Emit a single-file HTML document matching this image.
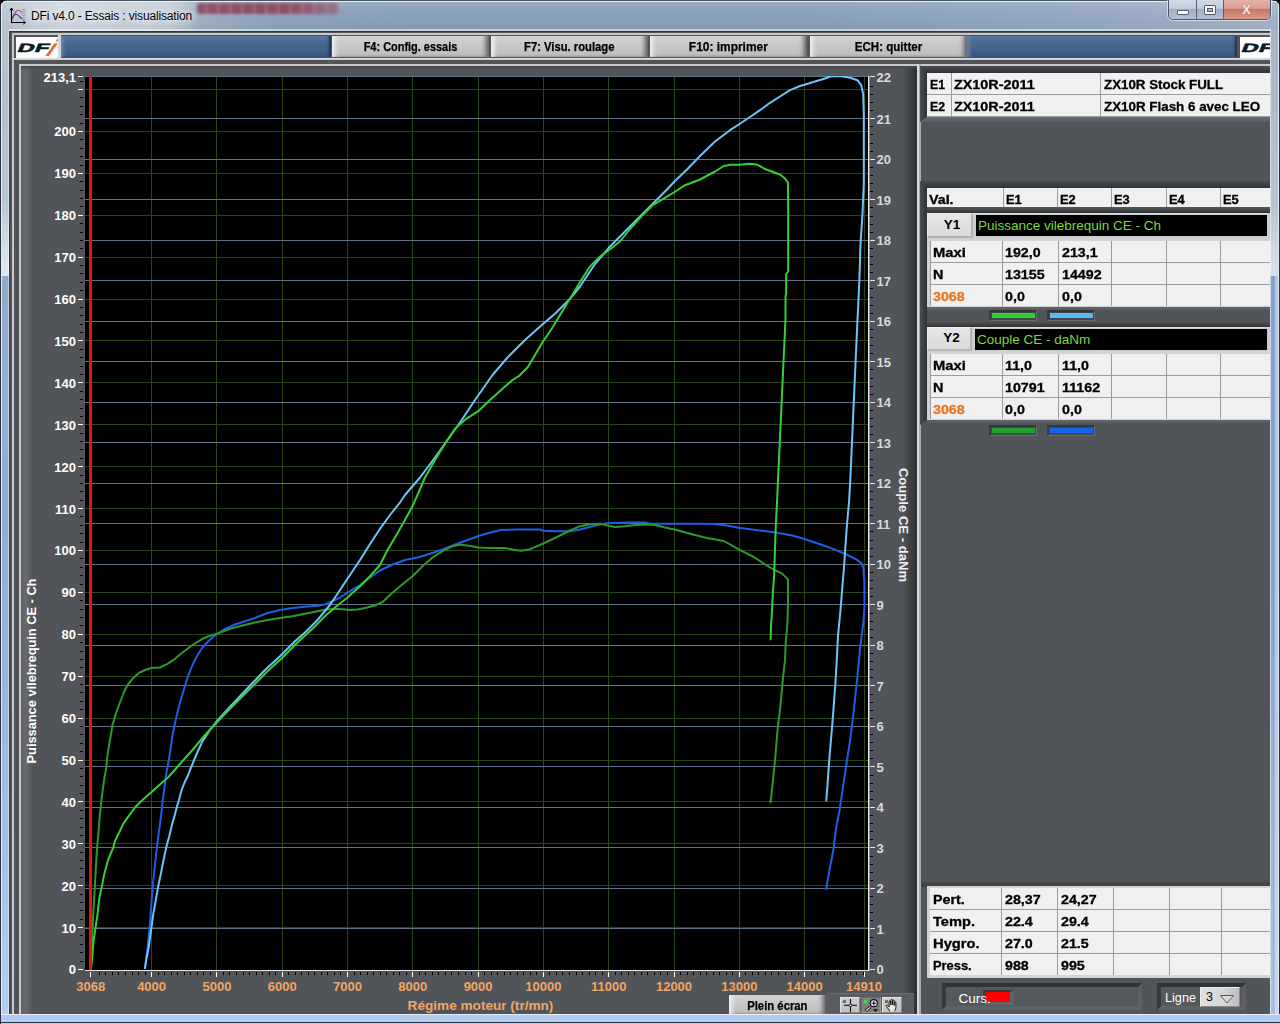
<!DOCTYPE html><html lang="fr"><head><meta charset="utf-8"><title>DFi v4.0 - Essais : visualisation</title><style>
html,body{margin:0;padding:0;}
body{width:1280px;height:1024px;overflow:hidden;position:relative;background:#b5cbe6;font-family:"Liberation Sans",sans-serif;}
div{position:absolute;box-sizing:border-box;}
.t{white-space:nowrap;font-size:12.5px;font-weight:bold;color:#000;}
.cell{background:#f0f0f0;-webkit-text-stroke-width:.3px;}
.btn{background:linear-gradient(#d3d3d3,#c9c9c9 40%,#bcbcbc);box-shadow:inset 6px 0 5px -3px #f2f2f2,inset -6px 0 5px -3px #5a5a5a,inset 0 1px 0 #dcdcdc,inset 0 -2px 2px -1px #9a9a9a;text-align:center;font-weight:bold;font-size:12.5px;color:#000;white-space:nowrap;-webkit-text-stroke-width:.25px;}
.nx{display:inline-block;transform:scaleX(.875);}
.wx{display:inline-block;transform:scaleX(1.14);transform-origin:0 50%;}
.blue{background:linear-gradient(#55779f,#47698f 30%,#3d5d85 80%,#2f4c72);}
svg{position:absolute;left:0;top:0;}
</style></head><body>
<div style="left:0;top:0;width:1280px;height:31px;background:linear-gradient(to right,#bcc6d4 0,#cfd8e3 60px,#c5cfdb 170px,#a0b1c5 200px,#90a5bc 260px,#8aa0b9 400px,#8aa0ba 800px,#96aac2 1100px,#a6b6ca 1280px);"></div>
<div style="left:0;top:2px;width:1280px;height:28px;background:linear-gradient(rgba(255,255,255,.12),rgba(255,255,255,0) 40%,rgba(0,0,0,.04));"></div>
<div style="left:197px;top:2.5px;width:142px;height:11.5px;background:linear-gradient(to right,rgba(150,140,160,0) 65%,rgba(160,150,168,.55) 100%),repeating-linear-gradient(90deg,#8a3850 0,#8a3850 7px,#9c6478 9px,#8a3850 12px);opacity:.8;filter:blur(1.8px);border-radius:3px;"></div>
<div style="left:9px;top:29px;width:1262px;height:2px;background:rgba(255,255,255,.5);"></div>
<div style="left:0px;top:0px;width:1280px;height:1px;background:#4a5562;"></div>
<div style="left:1px;top:1px;width:1278px;height:1px;background:#e6edf5;"></div>
<div style="left:0;top:31px;width:9px;height:245px;background:linear-gradient(#b9c3d1 0,#b0bfd0 69px,#b5c8da 169px,#dbe3ec 231px,#e0e7ef 245px);"></div>
<div style="left:0;top:276px;width:9px;height:748px;background:linear-gradient(#8fa9c8 0,#94b0d2 124px,#8facd2 236px,#a0bde2 524px,#b2cef0 724px,#b2cef0 748px);"></div>
<div style="left:1px;top:1px;width:1px;height:1021px;background:#e3ebf4;"></div>
<div style="left:8px;top:31px;width:1px;height:983px;background:rgba(255,255,255,.45);"></div>
<div style="left:1270px;top:31px;width:10px;height:245px;background:linear-gradient(#a6b6ca 0,#adbbcd 69px,#b5c3d2 169px,#d3dbe5 231px,#d8dfe8 245px);"></div>
<div style="left:1270px;top:276px;width:10px;height:748px;background:linear-gradient(to right,#86a4cc 0,#86a4cc 5px,#b4c9e4 5px);"></div>
<div style="left:1270px;top:276px;width:10px;height:748px;background:linear-gradient(rgba(255,255,255,0) 0,rgba(255,255,255,0) 300px,rgba(255,255,255,.3) 748px);"></div>
<div style="left:1270px;top:31px;width:1px;height:983px;background:rgba(255,255,255,.55);"></div>
<div style="left:1278px;top:1px;width:1px;height:1021px;background:#dbe5f0;"></div>
<div style="left:1279px;top:0;width:1px;height:1024px;background:#2c3440;"></div>
<div style="left:0;top:1014px;width:1280px;height:10px;background:linear-gradient(#e8f1fa 0,#e8f1fa 1px,#b0cdef 1px,#b0cdef 8px,#2c3644 8px,#2c3644 9px,#c4ccd4 9px);"></div>
<div style="left:0px;top:0px;width:1px;height:1024px;background:#2c3440;"></div>
<svg width="1280" height="8" viewBox="0 0 1280 8" style="left:0;top:0"><path d="M0 0H7C3 1 1 3 0 7Z" fill="#0c0c0c"/><path d="M1280 0H1273C1277 1 1279 3 1280 7Z" fill="#0c0c0c"/></svg>
<svg width="40" height="31" viewBox="0 0 40 31" style="left:0;top:0">
<path d="M22 9.500h3.500M22 11.500h3.500M22 13.500h3.500M22 15.500h3.500M22 17.500h3.500M22 19.500h3.500" stroke="#8b95a6" stroke-width=".8"/>
<path d="M11.500 8.500V22.500H25" fill="none" stroke="#000" stroke-width="1.100"/>
<path d="M9.900 10.600L11.500 8L13.100 10.600M23.200 20.900L25.700 22.500L23.200 24.100" fill="none" stroke="#000" stroke-width="1"/>
<path d="M12.500 20C13.500 14.500 16 10.200 18.500 10.200C20 10.200 21 11.500 22 12.700" fill="none" stroke="#e23a3a" stroke-width="1.100"/>
<path d="M12.200 18C13 16 15 14.200 16.500 14.200C18.500 14.500 20 17 22 19" fill="none" stroke="#3232c8" stroke-width="1.100"/>
</svg>
<div class="t " style="left:31px;top:9px;font-weight:normal;font-size:12px;letter-spacing:-0.15px;color:#000;text-shadow:0 0 6px #fff,0 0 10px #fff;">DFi v4.0 - Essais : visualisation</div>
<div style="left:1168px;top:0;width:103px;height:20px;border:1px solid #4a5766;border-top:none;border-radius:0 0 5px 5px;overflow:hidden;box-shadow:0 0 0 1px rgba(255,255,255,.55);"><div style="left:0;top:0;width:28px;height:19px;background:linear-gradient(#d2dbe6 0,#c0ccda 45%,#9fb0c5 50%,#b4c3d6);border-right:1px solid #55606e;"></div><div style="left:28px;top:0;width:27px;height:19px;background:linear-gradient(#d2dbe6 0,#c0ccda 45%,#9fb0c5 50%,#b4c3d6);border-right:1px solid #55606e;"></div><div style="left:55px;top:0;width:47px;height:19px;background:linear-gradient(#e2b3ad 0,#d99b92 45%,#c8776a 50%,#d89a8a);"></div></div>
<div style="left:1177px;top:10px;width:12px;height:5px;background:#fff;border:1px solid #535b66;border-radius:1px;"></div>
<div style="left:1204px;top:5px;width:12px;height:10px;background:#fff;border:1px solid #535b66;border-radius:1px;"></div>
<div style="left:1207px;top:8px;width:6px;height:4px;background:#a9b6c6;border:1px solid #535b66;"></div>
<div class="t " style="left:1242px;top:0px;font-size:16px;color:#f3e8e6;font-weight:bold;text-shadow:0 0 1px #7a3a34;font-family:'Liberation Sans',sans-serif;">x</div>
<div style="left:9px;top:31px;width:1261px;height:983px;background:#515458;"></div>
<div style="left:9px;top:31px;width:1261px;height:1px;background:#33363a;"></div>
<div style="left:9px;top:31px;width:1px;height:983px;background:#3a3d40;"></div>
<div style="left:12px;top:33px;width:1258px;height:2px;background:#c9c9c9;"></div>
<div style="left:12px;top:33px;width:2px;height:981px;background:#c9c9c9;"></div>
<div style="left:16px;top:37px;width:42px;height:21px;background:#fff;"></div>
<div style="left:58px;top:35px;width:3px;height:24px;background:#d4d4d4;"></div>
<div style="left:61px;top:36px;width:270px;height:21px;background:;background:linear-gradient(#57789f,#49698f 30%,#40608a 75%,#34527a);box-shadow:inset 5px 0 4px -3px #6c8cb4,inset -4px 0 3px -2px #1d2f48;"></div>
<div class="btn" style="left:332px;top:36px;width:157px;height:21px;line-height:23px;"><span class="nx" style="transform:scaleX(0.875)">F4: Config. essais</span></div>
<div class="btn" style="left:491px;top:36px;width:157px;height:21px;line-height:23px;"><span class="nx" style="transform:scaleX(0.9)">F7: Visu. roulage</span></div>
<div class="btn" style="left:650px;top:36px;width:157px;height:21px;line-height:23px;"><span class="nx" style="transform:scaleX(0.955)">F10: imprimer</span></div>
<div class="btn" style="left:809.5px;top:36px;width:157px;height:21px;line-height:23px;"><span class="nx" style="transform:scaleX(0.924)">ECH: quitter</span></div>
<div style="left:967px;top:36px;width:270px;height:21px;background:;background:linear-gradient(#57789f,#49698f 30%,#40608a 75%,#34527a);box-shadow:inset 5px 0 4px -3px #6c8cb4,inset -4px 0 3px -2px #1d2f48;"></div>
<div style="left:1240px;top:37px;width:30px;height:21px;background:#fff;"></div>
<div style="left:12px;top:58px;width:1258px;height:2px;background:;background:linear-gradient(#dcdcdc,#cacaca);"></div>
<svg width="42" height="21" viewBox="0 0 42 21" style="left:16px;top:37px;overflow:hidden"><g transform="translate(0.6,15.1) skewX(-22) scale(1.93,1)"><text x="0" y="0" font-family="Liberation Sans,sans-serif" font-weight="bold" font-size="12" fill="#0e1c27" stroke="#0e1c27" stroke-width=".55" letter-spacing="0.2">DF</text></g><g transform="translate(29.2,19.3) skewX(-27)"><text x="0" y="0" font-family="Liberation Sans,sans-serif" font-weight="bold" font-style="italic" font-size="23.5" fill="#e8672a" stroke="#e8672a" stroke-width=".15">i</text></g></svg>
<svg width="30" height="21" viewBox="0 0 30 21" style="left:1240px;top:37px;overflow:hidden"><g transform="translate(0.6,15.1) skewX(-22) scale(1.93,1)"><text x="0" y="0" font-family="Liberation Sans,sans-serif" font-weight="bold" font-size="12" fill="#0e1c27" stroke="#0e1c27" stroke-width=".55" letter-spacing="0.2">DF</text></g></svg>
<div style="left:19px;top:64px;width:900px;height:2px;background:#c9c9c9;"></div>
<div style="left:19px;top:64px;width:2px;height:950px;background:#c9c9c9;"></div>
<div style="left:917px;top:64px;width:2px;height:950px;background:#dadada;"></div>
<div style="left:919px;top:64px;width:2px;height:950px;background:#a8aaad;"></div>
<div style="left:921px;top:64px;width:349px;height:2px;background:#c9c9c9;"></div>
<div style="left:21px;top:66px;width:12px;height:948px;background:;background:linear-gradient(to right,#626467,#67696b 45%,#515458);"></div>
<div style="left:903px;top:66px;width:14px;height:948px;background:;background:linear-gradient(to right,#515458,#3f4144 50%,#2e3033);"></div>
<div style="left:21px;top:66px;width:896px;height:4px;background:;background:linear-gradient(#43464a,rgba(81,84,88,0));"></div>
<svg width="1280" height="1024" viewBox="0 0 1280 1024" style="left:0;top:0" font-family="Liberation Sans,sans-serif" font-weight="bold" font-size="13">
<rect x="85" y="76" width="783" height="894" fill="#000"/>
<g shape-rendering="crispEdges">
<rect x="151" y="76" width="1" height="894" fill="#2a4516"/>
<rect x="216" y="76" width="1" height="894" fill="#2a4516"/>
<rect x="282" y="76" width="1" height="894" fill="#2a4516"/>
<rect x="347" y="76" width="1" height="894" fill="#2a4516"/>
<rect x="412" y="76" width="1" height="894" fill="#2a4516"/>
<rect x="478" y="76" width="1" height="894" fill="#2a4516"/>
<rect x="543" y="76" width="1" height="894" fill="#2a4516"/>
<rect x="608" y="76" width="1" height="894" fill="#2a4516"/>
<rect x="674" y="76" width="1" height="894" fill="#2a4516"/>
<rect x="739" y="76" width="1" height="894" fill="#2a4516"/>
<rect x="804" y="76" width="1" height="894" fill="#2a4516"/>
<rect x="864" y="76" width="1" height="894" fill="#2a4516"/>
<rect x="85" y="927" width="783" height="1" fill="#2a4516"/>
<rect x="85" y="885" width="783" height="1" fill="#2a4516"/>
<rect x="85" y="843" width="783" height="1" fill="#2a4516"/>
<rect x="85" y="801" width="783" height="1" fill="#2a4516"/>
<rect x="85" y="760" width="783" height="1" fill="#2a4516"/>
<rect x="85" y="718" width="783" height="1" fill="#2a4516"/>
<rect x="85" y="676" width="783" height="1" fill="#2a4516"/>
<rect x="85" y="634" width="783" height="1" fill="#2a4516"/>
<rect x="85" y="592" width="783" height="1" fill="#2a4516"/>
<rect x="85" y="550" width="783" height="1" fill="#2a4516"/>
<rect x="85" y="508" width="783" height="1" fill="#2a4516"/>
<rect x="85" y="466" width="783" height="1" fill="#2a4516"/>
<rect x="85" y="424" width="783" height="1" fill="#2a4516"/>
<rect x="85" y="382" width="783" height="1" fill="#2a4516"/>
<rect x="85" y="340" width="783" height="1" fill="#2a4516"/>
<rect x="85" y="299" width="783" height="1" fill="#2a4516"/>
<rect x="85" y="257" width="783" height="1" fill="#2a4516"/>
<rect x="85" y="215" width="783" height="1" fill="#2a4516"/>
<rect x="85" y="173" width="783" height="1" fill="#2a4516"/>
<rect x="85" y="131" width="783" height="1" fill="#2a4516"/>
<rect x="85" y="89" width="783" height="1" fill="#2a4516"/>
<rect x="85" y="928" width="783" height="1" fill="#607288"/>
<rect x="85" y="888" width="783" height="1" fill="#607288"/>
<rect x="85" y="847" width="783" height="1" fill="#607288"/>
<rect x="85" y="807" width="783" height="1" fill="#607288"/>
<rect x="85" y="766" width="783" height="1" fill="#607288"/>
<rect x="85" y="726" width="783" height="1" fill="#607288"/>
<rect x="85" y="685" width="783" height="1" fill="#607288"/>
<rect x="85" y="645" width="783" height="1" fill="#607288"/>
<rect x="85" y="604" width="783" height="1" fill="#607288"/>
<rect x="85" y="564" width="783" height="1" fill="#607288"/>
<rect x="85" y="523" width="783" height="1" fill="#607288"/>
<rect x="85" y="483" width="783" height="1" fill="#607288"/>
<rect x="85" y="442" width="783" height="1" fill="#607288"/>
<rect x="85" y="402" width="783" height="1" fill="#607288"/>
<rect x="85" y="361" width="783" height="1" fill="#607288"/>
<rect x="85" y="321" width="783" height="1" fill="#607288"/>
<rect x="85" y="280" width="783" height="1" fill="#607288"/>
<rect x="85" y="240" width="783" height="1" fill="#607288"/>
<rect x="85" y="199" width="783" height="1" fill="#607288"/>
<rect x="85" y="159" width="783" height="1" fill="#607288"/>
<rect x="85" y="118" width="783" height="1" fill="#607288"/>
<rect x="85" y="76" width="783" height="1" fill="#607288"/>
</g>
<clipPath id="pc"><rect x="85" y="76" width="783" height="894"/></clipPath><g clip-path="url(#pc)">
<polyline points="144.9,969.0 146.2,958.0 147.5,947.5 149.4,929.8 150.6,914.5 151.9,896.8 153.2,881.5 155.1,863.8 156.8,848.1 158.3,836.4 159.9,824.7 161.4,813.0 162.6,801.2 164.2,789.5 165.7,777.8 166.9,770.0 167.5,767.5 170.0,752.5 172.5,735.0 176.2,717.5 180.0,702.5 183.8,690.0 187.5,677.5 192.5,665.0 197.5,655.0 202.5,647.5 207.5,642.0 212.5,637.5 217.5,633.8 225.0,628.8 235.0,624.5 245.0,621.2 255.0,618.0 267.5,613.0 280.0,610.0 292.5,608.0 305.0,606.8 317.5,605.8 325.0,604.5 332.5,601.2 340.0,597.5 350.0,591.2 360.0,585.0 370.0,577.5 380.0,570.5 392.5,564.5 405.0,560.0 417.5,557.5 430.0,553.8 442.5,549.5 455.0,544.5 467.5,540.0 480.0,535.5 492.5,532.0 501.2,530.0 517.5,529.5 540.0,529.5 543.8,530.8 555.0,531.2 570.0,531.2 580.0,529.5 592.5,526.2 600.0,524.5 608.8,523.0 630.0,522.5 645.0,522.5 650.0,523.8 674.5,523.8 700.0,523.8 714.4,524.0 723.8,525.0 738.8,527.8 753.8,529.7 772.5,532.0 791.2,535.3 804.4,539.0 819.4,544.0 834.4,549.4 847.5,555.0 856.9,559.7 861.6,563.4 863.4,568.0 864.4,583.0 864.4,607.5 863.4,622.5 861.6,635.6 859.7,652.5 859.0,660.0 856.7,683.4 853.7,711.6 850.2,739.7 846.6,763.0 843.1,786.6 839.6,810.0 836.0,828.8 833.8,847.5 830.2,866.2 827.2,882.6 826.2,890.0" fill="none" stroke="#1c5fe6" stroke-width="2" stroke-linejoin="round"/>
<polyline points="91.0,969.0 91.6,950.0 92.2,934.8 93.5,909.5 94.8,887.9 96.0,865.0 97.0,848.1 98.2,836.4 99.7,816.9 101.3,801.2 102.8,789.5 104.4,777.8 106.0,770.0 107.5,755.0 110.0,740.0 112.5,725.0 116.2,712.5 120.0,702.5 123.8,692.5 127.5,685.0 132.5,678.8 138.8,673.0 145.0,670.0 151.2,668.0 160.0,667.5 167.5,663.8 175.0,658.8 182.5,652.5 192.5,645.0 202.5,638.8 210.0,635.8 216.8,633.8 230.0,628.8 242.5,625.5 255.0,622.5 267.5,620.0 280.0,618.0 292.5,616.2 305.0,613.8 317.5,611.2 326.2,609.5 335.0,608.8 342.5,609.2 350.0,610.0 357.5,609.5 365.0,608.0 375.0,605.5 382.5,602.0 390.0,595.0 400.0,586.2 412.5,576.2 422.5,566.2 432.5,557.5 442.5,551.2 452.5,546.2 460.0,544.5 467.5,545.5 478.2,547.5 490.0,548.0 505.0,548.0 515.0,550.0 521.2,550.8 530.0,549.2 540.0,545.0 555.0,538.0 570.0,530.5 580.0,526.2 590.0,524.2 600.0,523.8 608.8,525.8 615.0,527.0 625.0,526.2 635.0,525.0 645.0,524.5 655.0,525.0 665.0,527.5 674.5,529.5 693.8,534.8 706.9,538.0 723.8,541.0 739.7,549.8 753.8,557.0 765.0,564.4 774.4,570.0 781.9,573.4 788.0,579.4 788.0,602.0 787.5,622.5 785.6,645.0 785.0,660.0 782.9,678.8 780.3,706.9 777.5,730.3 775.2,758.4 772.8,781.9 770.5,803.0" fill="none" stroke="#2a9a2a" stroke-width="2" stroke-linejoin="round"/>
<polyline points="144.9,969.0 146.5,958.0 148.7,947.5 151.3,928.5 153.2,914.5 155.7,900.6 158.2,886.6 160.8,873.9 163.3,861.2 166.1,848.1 169.2,836.4 172.0,824.7 174.3,816.9 176.7,807.5 179.0,799.7 181.8,789.5 184.9,781.7 188.0,775.5 190.0,770.0 196.2,755.0 202.5,741.2 210.0,730.0 216.8,721.2 227.5,709.5 240.0,696.2 252.5,683.0 265.0,670.0 280.0,656.2 295.0,641.2 305.0,632.5 317.5,620.0 330.0,605.0 340.0,590.0 350.0,575.0 360.0,560.0 370.0,544.0 380.0,528.8 390.0,515.0 400.0,502.5 405.0,495.0 420.0,477.5 435.0,457.5 447.5,440.0 460.0,422.5 475.0,400.0 492.5,375.0 507.5,357.5 525.0,340.0 543.2,323.8 555.0,313.8 570.0,298.8 580.0,286.5 595.0,264.0 608.8,247.8 620.0,236.5 630.0,226.5 642.5,214.0 655.0,201.5 667.5,189.0 674.5,181.5 687.5,169.0 700.0,156.0 715.0,141.5 730.0,130.2 739.5,124.0 750.0,117.0 760.0,110.2 770.0,102.8 780.0,96.5 790.0,90.2 800.0,86.0 804.5,84.8 815.0,81.5 825.0,78.5 830.0,76.5 840.0,76.0 850.0,77.8 857.5,80.2 861.2,85.2 863.2,94.0 863.8,114.0 863.8,184.0 862.5,214.0 860.5,244.0 859.5,276.5 858.2,306.5 857.5,319.0 850.3,480.0 849.0,502.5 847.1,523.0 845.2,549.4 843.8,570.0 841.9,592.5 840.4,611.2 838.0,635.6 836.8,660.0 835.4,683.4 833.3,711.6 831.4,735.0 829.0,763.0 827.4,786.6 826.2,801.3" fill="none" stroke="#6cc4fb" stroke-width="2" stroke-linejoin="round"/>
<polyline points="91.0,969.0 92.2,957.7 93.5,941.2 95.4,928.5 97.3,915.8 99.2,899.3 101.8,886.6 104.3,873.9 108.1,860.0 113.0,848.1 115.3,840.3 119.2,832.5 123.2,823.9 127.0,818.4 134.9,807.5 141.1,801.2 148.2,795.0 154.4,789.5 163.0,781.7 168.5,777.0 174.7,770.0 180.0,763.8 192.5,750.0 205.0,735.0 216.8,722.5 230.0,708.8 242.5,696.2 255.0,683.8 267.5,671.2 282.5,657.5 297.5,642.5 312.5,628.8 326.2,615.0 335.0,607.5 347.5,597.5 360.0,586.2 370.0,576.2 380.0,565.0 387.5,550.0 395.0,537.5 405.0,520.0 412.5,506.2 417.5,495.0 425.0,477.5 435.0,460.0 445.0,443.8 455.0,428.8 466.2,418.8 478.2,411.2 490.0,400.0 502.5,388.8 512.5,380.0 518.8,376.2 527.5,367.5 535.0,355.0 543.2,341.2 552.5,327.5 560.0,315.0 570.0,298.8 580.0,282.0 590.0,266.5 600.0,256.5 608.8,250.2 620.0,241.5 630.0,229.0 642.5,215.2 652.5,205.2 665.0,197.8 674.5,192.0 685.0,185.2 700.0,179.5 715.0,171.5 723.8,166.0 730.0,164.8 739.5,164.8 750.0,163.8 757.5,164.8 765.0,169.0 775.0,172.8 780.0,174.5 785.0,178.5 788.0,182.8 788.2,214.0 788.2,271.5 786.2,274.0 786.2,294.0 785.5,296.5 785.5,319.0 778.0,480.0 777.2,498.8 775.9,523.0 774.8,555.0 774.0,577.5 772.9,592.5 772.0,611.0 771.0,626.0 770.6,640.3" fill="none" stroke="#35d035" stroke-width="2" stroke-linejoin="round"/>
</g>
<rect x="89" y="76" width="3" height="894" fill="#e8140c" shape-rendering="crispEdges"/>
<g shape-rendering="crispEdges">
<rect x="85" y="970" width="785" height="1" fill="#e4e4e4"/>
<rect x="868" y="76" width="1" height="895" fill="#ececec"/>
<rect x="869" y="76" width="1" height="895" fill="#8b8d8f"/>
<rect x="78" y="969" width="5" height="1" fill="#fff"/>
<rect x="80" y="961" width="3" height="1" fill="#000"/>
<rect x="80" y="952" width="3" height="1" fill="#000"/>
<rect x="80" y="944" width="3" height="1" fill="#000"/>
<rect x="80" y="935" width="3" height="1" fill="#000"/>
<rect x="78" y="927" width="5" height="1" fill="#fff"/>
<rect x="80" y="919" width="3" height="1" fill="#000"/>
<rect x="80" y="910" width="3" height="1" fill="#000"/>
<rect x="80" y="902" width="3" height="1" fill="#000"/>
<rect x="80" y="894" width="3" height="1" fill="#000"/>
<rect x="78" y="885" width="5" height="1" fill="#fff"/>
<rect x="80" y="877" width="3" height="1" fill="#000"/>
<rect x="80" y="868" width="3" height="1" fill="#000"/>
<rect x="80" y="860" width="3" height="1" fill="#000"/>
<rect x="80" y="852" width="3" height="1" fill="#000"/>
<rect x="78" y="843" width="5" height="1" fill="#fff"/>
<rect x="80" y="835" width="3" height="1" fill="#000"/>
<rect x="80" y="827" width="3" height="1" fill="#000"/>
<rect x="80" y="818" width="3" height="1" fill="#000"/>
<rect x="80" y="810" width="3" height="1" fill="#000"/>
<rect x="78" y="801" width="5" height="1" fill="#fff"/>
<rect x="80" y="793" width="3" height="1" fill="#000"/>
<rect x="80" y="785" width="3" height="1" fill="#000"/>
<rect x="80" y="776" width="3" height="1" fill="#000"/>
<rect x="80" y="768" width="3" height="1" fill="#000"/>
<rect x="78" y="760" width="5" height="1" fill="#fff"/>
<rect x="80" y="751" width="3" height="1" fill="#000"/>
<rect x="80" y="743" width="3" height="1" fill="#000"/>
<rect x="80" y="734" width="3" height="1" fill="#000"/>
<rect x="80" y="726" width="3" height="1" fill="#000"/>
<rect x="78" y="718" width="5" height="1" fill="#fff"/>
<rect x="80" y="709" width="3" height="1" fill="#000"/>
<rect x="80" y="701" width="3" height="1" fill="#000"/>
<rect x="80" y="692" width="3" height="1" fill="#000"/>
<rect x="80" y="684" width="3" height="1" fill="#000"/>
<rect x="78" y="676" width="5" height="1" fill="#fff"/>
<rect x="80" y="667" width="3" height="1" fill="#000"/>
<rect x="80" y="659" width="3" height="1" fill="#000"/>
<rect x="80" y="651" width="3" height="1" fill="#000"/>
<rect x="80" y="642" width="3" height="1" fill="#000"/>
<rect x="78" y="634" width="5" height="1" fill="#fff"/>
<rect x="80" y="625" width="3" height="1" fill="#000"/>
<rect x="80" y="617" width="3" height="1" fill="#000"/>
<rect x="80" y="609" width="3" height="1" fill="#000"/>
<rect x="80" y="600" width="3" height="1" fill="#000"/>
<rect x="78" y="592" width="5" height="1" fill="#fff"/>
<rect x="80" y="584" width="3" height="1" fill="#000"/>
<rect x="80" y="575" width="3" height="1" fill="#000"/>
<rect x="80" y="567" width="3" height="1" fill="#000"/>
<rect x="80" y="558" width="3" height="1" fill="#000"/>
<rect x="78" y="550" width="5" height="1" fill="#fff"/>
<rect x="80" y="542" width="3" height="1" fill="#000"/>
<rect x="80" y="533" width="3" height="1" fill="#000"/>
<rect x="80" y="525" width="3" height="1" fill="#000"/>
<rect x="80" y="516" width="3" height="1" fill="#000"/>
<rect x="78" y="508" width="5" height="1" fill="#fff"/>
<rect x="80" y="500" width="3" height="1" fill="#000"/>
<rect x="80" y="491" width="3" height="1" fill="#000"/>
<rect x="80" y="483" width="3" height="1" fill="#000"/>
<rect x="80" y="475" width="3" height="1" fill="#000"/>
<rect x="78" y="466" width="5" height="1" fill="#fff"/>
<rect x="80" y="458" width="3" height="1" fill="#000"/>
<rect x="80" y="449" width="3" height="1" fill="#000"/>
<rect x="80" y="441" width="3" height="1" fill="#000"/>
<rect x="80" y="433" width="3" height="1" fill="#000"/>
<rect x="78" y="424" width="5" height="1" fill="#fff"/>
<rect x="80" y="416" width="3" height="1" fill="#000"/>
<rect x="80" y="408" width="3" height="1" fill="#000"/>
<rect x="80" y="399" width="3" height="1" fill="#000"/>
<rect x="80" y="391" width="3" height="1" fill="#000"/>
<rect x="78" y="382" width="5" height="1" fill="#fff"/>
<rect x="80" y="374" width="3" height="1" fill="#000"/>
<rect x="80" y="366" width="3" height="1" fill="#000"/>
<rect x="80" y="357" width="3" height="1" fill="#000"/>
<rect x="80" y="349" width="3" height="1" fill="#000"/>
<rect x="78" y="340" width="5" height="1" fill="#fff"/>
<rect x="80" y="332" width="3" height="1" fill="#000"/>
<rect x="80" y="324" width="3" height="1" fill="#000"/>
<rect x="80" y="315" width="3" height="1" fill="#000"/>
<rect x="80" y="307" width="3" height="1" fill="#000"/>
<rect x="78" y="299" width="5" height="1" fill="#fff"/>
<rect x="80" y="290" width="3" height="1" fill="#000"/>
<rect x="80" y="282" width="3" height="1" fill="#000"/>
<rect x="80" y="273" width="3" height="1" fill="#000"/>
<rect x="80" y="265" width="3" height="1" fill="#000"/>
<rect x="78" y="257" width="5" height="1" fill="#fff"/>
<rect x="80" y="248" width="3" height="1" fill="#000"/>
<rect x="80" y="240" width="3" height="1" fill="#000"/>
<rect x="80" y="232" width="3" height="1" fill="#000"/>
<rect x="80" y="223" width="3" height="1" fill="#000"/>
<rect x="78" y="215" width="5" height="1" fill="#fff"/>
<rect x="80" y="206" width="3" height="1" fill="#000"/>
<rect x="80" y="198" width="3" height="1" fill="#000"/>
<rect x="80" y="190" width="3" height="1" fill="#000"/>
<rect x="80" y="181" width="3" height="1" fill="#000"/>
<rect x="78" y="173" width="5" height="1" fill="#fff"/>
<rect x="80" y="165" width="3" height="1" fill="#000"/>
<rect x="80" y="156" width="3" height="1" fill="#000"/>
<rect x="80" y="148" width="3" height="1" fill="#000"/>
<rect x="80" y="139" width="3" height="1" fill="#000"/>
<rect x="78" y="131" width="5" height="1" fill="#fff"/>
<rect x="80" y="123" width="3" height="1" fill="#000"/>
<rect x="80" y="114" width="3" height="1" fill="#000"/>
<rect x="80" y="106" width="3" height="1" fill="#000"/>
<rect x="80" y="97" width="3" height="1" fill="#000"/>
<rect x="78" y="89" width="5" height="1" fill="#fff"/>
<rect x="80" y="81" width="3" height="1" fill="#000"/>
<rect x="78" y="76" width="5" height="1" fill="#fff"/>
<rect x="870" y="969" width="5" height="1" fill="#e6e6e6"/>
<rect x="870" y="961" width="3" height="1" fill="#000"/>
<rect x="870" y="953" width="3" height="1" fill="#000"/>
<rect x="870" y="945" width="3" height="1" fill="#000"/>
<rect x="870" y="937" width="3" height="1" fill="#000"/>
<rect x="870" y="928" width="5" height="1" fill="#e6e6e6"/>
<rect x="870" y="920" width="3" height="1" fill="#000"/>
<rect x="870" y="912" width="3" height="1" fill="#000"/>
<rect x="870" y="904" width="3" height="1" fill="#000"/>
<rect x="870" y="896" width="3" height="1" fill="#000"/>
<rect x="870" y="888" width="5" height="1" fill="#e6e6e6"/>
<rect x="870" y="880" width="3" height="1" fill="#000"/>
<rect x="870" y="872" width="3" height="1" fill="#000"/>
<rect x="870" y="864" width="3" height="1" fill="#000"/>
<rect x="870" y="856" width="3" height="1" fill="#000"/>
<rect x="870" y="847" width="5" height="1" fill="#e6e6e6"/>
<rect x="870" y="839" width="3" height="1" fill="#000"/>
<rect x="870" y="831" width="3" height="1" fill="#000"/>
<rect x="870" y="823" width="3" height="1" fill="#000"/>
<rect x="870" y="815" width="3" height="1" fill="#000"/>
<rect x="870" y="807" width="5" height="1" fill="#e6e6e6"/>
<rect x="870" y="799" width="3" height="1" fill="#000"/>
<rect x="870" y="791" width="3" height="1" fill="#000"/>
<rect x="870" y="783" width="3" height="1" fill="#000"/>
<rect x="870" y="775" width="3" height="1" fill="#000"/>
<rect x="870" y="766" width="5" height="1" fill="#e6e6e6"/>
<rect x="870" y="758" width="3" height="1" fill="#000"/>
<rect x="870" y="750" width="3" height="1" fill="#000"/>
<rect x="870" y="742" width="3" height="1" fill="#000"/>
<rect x="870" y="734" width="3" height="1" fill="#000"/>
<rect x="870" y="726" width="5" height="1" fill="#e6e6e6"/>
<rect x="870" y="718" width="3" height="1" fill="#000"/>
<rect x="870" y="710" width="3" height="1" fill="#000"/>
<rect x="870" y="702" width="3" height="1" fill="#000"/>
<rect x="870" y="694" width="3" height="1" fill="#000"/>
<rect x="870" y="685" width="5" height="1" fill="#e6e6e6"/>
<rect x="870" y="677" width="3" height="1" fill="#000"/>
<rect x="870" y="669" width="3" height="1" fill="#000"/>
<rect x="870" y="661" width="3" height="1" fill="#000"/>
<rect x="870" y="653" width="3" height="1" fill="#000"/>
<rect x="870" y="645" width="5" height="1" fill="#e6e6e6"/>
<rect x="870" y="637" width="3" height="1" fill="#000"/>
<rect x="870" y="629" width="3" height="1" fill="#000"/>
<rect x="870" y="621" width="3" height="1" fill="#000"/>
<rect x="870" y="613" width="3" height="1" fill="#000"/>
<rect x="870" y="604" width="5" height="1" fill="#e6e6e6"/>
<rect x="870" y="596" width="3" height="1" fill="#000"/>
<rect x="870" y="588" width="3" height="1" fill="#000"/>
<rect x="870" y="580" width="3" height="1" fill="#000"/>
<rect x="870" y="572" width="3" height="1" fill="#000"/>
<rect x="870" y="564" width="5" height="1" fill="#e6e6e6"/>
<rect x="870" y="556" width="3" height="1" fill="#000"/>
<rect x="870" y="548" width="3" height="1" fill="#000"/>
<rect x="870" y="540" width="3" height="1" fill="#000"/>
<rect x="870" y="531" width="3" height="1" fill="#000"/>
<rect x="870" y="523" width="5" height="1" fill="#e6e6e6"/>
<rect x="870" y="515" width="3" height="1" fill="#000"/>
<rect x="870" y="507" width="3" height="1" fill="#000"/>
<rect x="870" y="499" width="3" height="1" fill="#000"/>
<rect x="870" y="491" width="3" height="1" fill="#000"/>
<rect x="870" y="483" width="5" height="1" fill="#e6e6e6"/>
<rect x="870" y="475" width="3" height="1" fill="#000"/>
<rect x="870" y="467" width="3" height="1" fill="#000"/>
<rect x="870" y="459" width="3" height="1" fill="#000"/>
<rect x="870" y="450" width="3" height="1" fill="#000"/>
<rect x="870" y="442" width="5" height="1" fill="#e6e6e6"/>
<rect x="870" y="434" width="3" height="1" fill="#000"/>
<rect x="870" y="426" width="3" height="1" fill="#000"/>
<rect x="870" y="418" width="3" height="1" fill="#000"/>
<rect x="870" y="410" width="3" height="1" fill="#000"/>
<rect x="870" y="402" width="5" height="1" fill="#e6e6e6"/>
<rect x="870" y="394" width="3" height="1" fill="#000"/>
<rect x="870" y="386" width="3" height="1" fill="#000"/>
<rect x="870" y="378" width="3" height="1" fill="#000"/>
<rect x="870" y="369" width="3" height="1" fill="#000"/>
<rect x="870" y="361" width="5" height="1" fill="#e6e6e6"/>
<rect x="870" y="353" width="3" height="1" fill="#000"/>
<rect x="870" y="345" width="3" height="1" fill="#000"/>
<rect x="870" y="337" width="3" height="1" fill="#000"/>
<rect x="870" y="329" width="3" height="1" fill="#000"/>
<rect x="870" y="321" width="5" height="1" fill="#e6e6e6"/>
<rect x="870" y="313" width="3" height="1" fill="#000"/>
<rect x="870" y="305" width="3" height="1" fill="#000"/>
<rect x="870" y="297" width="3" height="1" fill="#000"/>
<rect x="870" y="288" width="3" height="1" fill="#000"/>
<rect x="870" y="280" width="5" height="1" fill="#e6e6e6"/>
<rect x="870" y="272" width="3" height="1" fill="#000"/>
<rect x="870" y="264" width="3" height="1" fill="#000"/>
<rect x="870" y="256" width="3" height="1" fill="#000"/>
<rect x="870" y="248" width="3" height="1" fill="#000"/>
<rect x="870" y="240" width="5" height="1" fill="#e6e6e6"/>
<rect x="870" y="232" width="3" height="1" fill="#000"/>
<rect x="870" y="224" width="3" height="1" fill="#000"/>
<rect x="870" y="216" width="3" height="1" fill="#000"/>
<rect x="870" y="207" width="3" height="1" fill="#000"/>
<rect x="870" y="199" width="5" height="1" fill="#e6e6e6"/>
<rect x="870" y="191" width="3" height="1" fill="#000"/>
<rect x="870" y="183" width="3" height="1" fill="#000"/>
<rect x="870" y="175" width="3" height="1" fill="#000"/>
<rect x="870" y="167" width="3" height="1" fill="#000"/>
<rect x="870" y="159" width="5" height="1" fill="#e6e6e6"/>
<rect x="870" y="151" width="3" height="1" fill="#000"/>
<rect x="870" y="143" width="3" height="1" fill="#000"/>
<rect x="870" y="134" width="3" height="1" fill="#000"/>
<rect x="870" y="126" width="3" height="1" fill="#000"/>
<rect x="870" y="118" width="5" height="1" fill="#e6e6e6"/>
<rect x="870" y="110" width="3" height="1" fill="#000"/>
<rect x="870" y="102" width="3" height="1" fill="#000"/>
<rect x="870" y="94" width="3" height="1" fill="#000"/>
<rect x="870" y="86" width="3" height="1" fill="#000"/>
<rect x="870" y="76" width="5" height="1" fill="#e6e6e6"/>
<rect x="99" y="972" width="1" height="3" fill="#000"/>
<rect x="105" y="972" width="1" height="3" fill="#000"/>
<rect x="112" y="972" width="1" height="3" fill="#000"/>
<rect x="118" y="972" width="1" height="3" fill="#000"/>
<rect x="125" y="972" width="1" height="3" fill="#000"/>
<rect x="132" y="972" width="1" height="3" fill="#000"/>
<rect x="138" y="972" width="1" height="3" fill="#000"/>
<rect x="145" y="972" width="1" height="3" fill="#000"/>
<rect x="151" y="972" width="1" height="5" fill="#fff"/>
<rect x="158" y="972" width="1" height="3" fill="#000"/>
<rect x="164" y="972" width="1" height="3" fill="#000"/>
<rect x="171" y="972" width="1" height="3" fill="#000"/>
<rect x="177" y="972" width="1" height="3" fill="#000"/>
<rect x="184" y="972" width="1" height="3" fill="#000"/>
<rect x="190" y="972" width="1" height="3" fill="#000"/>
<rect x="197" y="972" width="1" height="3" fill="#000"/>
<rect x="203" y="972" width="1" height="3" fill="#000"/>
<rect x="210" y="972" width="1" height="3" fill="#000"/>
<rect x="216" y="972" width="1" height="5" fill="#fff"/>
<rect x="223" y="972" width="1" height="3" fill="#000"/>
<rect x="229" y="972" width="1" height="3" fill="#000"/>
<rect x="236" y="972" width="1" height="3" fill="#000"/>
<rect x="243" y="972" width="1" height="3" fill="#000"/>
<rect x="249" y="972" width="1" height="3" fill="#000"/>
<rect x="256" y="972" width="1" height="3" fill="#000"/>
<rect x="262" y="972" width="1" height="3" fill="#000"/>
<rect x="269" y="972" width="1" height="3" fill="#000"/>
<rect x="275" y="972" width="1" height="3" fill="#000"/>
<rect x="282" y="972" width="1" height="5" fill="#fff"/>
<rect x="288" y="972" width="1" height="3" fill="#000"/>
<rect x="295" y="972" width="1" height="3" fill="#000"/>
<rect x="301" y="972" width="1" height="3" fill="#000"/>
<rect x="308" y="972" width="1" height="3" fill="#000"/>
<rect x="314" y="972" width="1" height="3" fill="#000"/>
<rect x="321" y="972" width="1" height="3" fill="#000"/>
<rect x="327" y="972" width="1" height="3" fill="#000"/>
<rect x="334" y="972" width="1" height="3" fill="#000"/>
<rect x="340" y="972" width="1" height="3" fill="#000"/>
<rect x="347" y="972" width="1" height="5" fill="#fff"/>
<rect x="354" y="972" width="1" height="3" fill="#000"/>
<rect x="360" y="972" width="1" height="3" fill="#000"/>
<rect x="367" y="972" width="1" height="3" fill="#000"/>
<rect x="373" y="972" width="1" height="3" fill="#000"/>
<rect x="380" y="972" width="1" height="3" fill="#000"/>
<rect x="386" y="972" width="1" height="3" fill="#000"/>
<rect x="393" y="972" width="1" height="3" fill="#000"/>
<rect x="399" y="972" width="1" height="3" fill="#000"/>
<rect x="406" y="972" width="1" height="3" fill="#000"/>
<rect x="412" y="972" width="1" height="5" fill="#fff"/>
<rect x="419" y="972" width="1" height="3" fill="#000"/>
<rect x="425" y="972" width="1" height="3" fill="#000"/>
<rect x="432" y="972" width="1" height="3" fill="#000"/>
<rect x="438" y="972" width="1" height="3" fill="#000"/>
<rect x="445" y="972" width="1" height="3" fill="#000"/>
<rect x="451" y="972" width="1" height="3" fill="#000"/>
<rect x="458" y="972" width="1" height="3" fill="#000"/>
<rect x="465" y="972" width="1" height="3" fill="#000"/>
<rect x="471" y="972" width="1" height="3" fill="#000"/>
<rect x="478" y="972" width="1" height="5" fill="#fff"/>
<rect x="484" y="972" width="1" height="3" fill="#000"/>
<rect x="491" y="972" width="1" height="3" fill="#000"/>
<rect x="497" y="972" width="1" height="3" fill="#000"/>
<rect x="504" y="972" width="1" height="3" fill="#000"/>
<rect x="510" y="972" width="1" height="3" fill="#000"/>
<rect x="517" y="972" width="1" height="3" fill="#000"/>
<rect x="523" y="972" width="1" height="3" fill="#000"/>
<rect x="530" y="972" width="1" height="3" fill="#000"/>
<rect x="536" y="972" width="1" height="3" fill="#000"/>
<rect x="543" y="972" width="1" height="5" fill="#fff"/>
<rect x="549" y="972" width="1" height="3" fill="#000"/>
<rect x="556" y="972" width="1" height="3" fill="#000"/>
<rect x="562" y="972" width="1" height="3" fill="#000"/>
<rect x="569" y="972" width="1" height="3" fill="#000"/>
<rect x="576" y="972" width="1" height="3" fill="#000"/>
<rect x="582" y="972" width="1" height="3" fill="#000"/>
<rect x="589" y="972" width="1" height="3" fill="#000"/>
<rect x="595" y="972" width="1" height="3" fill="#000"/>
<rect x="602" y="972" width="1" height="3" fill="#000"/>
<rect x="608" y="972" width="1" height="5" fill="#fff"/>
<rect x="615" y="972" width="1" height="3" fill="#000"/>
<rect x="621" y="972" width="1" height="3" fill="#000"/>
<rect x="628" y="972" width="1" height="3" fill="#000"/>
<rect x="634" y="972" width="1" height="3" fill="#000"/>
<rect x="641" y="972" width="1" height="3" fill="#000"/>
<rect x="647" y="972" width="1" height="3" fill="#000"/>
<rect x="654" y="972" width="1" height="3" fill="#000"/>
<rect x="660" y="972" width="1" height="3" fill="#000"/>
<rect x="667" y="972" width="1" height="3" fill="#000"/>
<rect x="674" y="972" width="1" height="5" fill="#fff"/>
<rect x="680" y="972" width="1" height="3" fill="#000"/>
<rect x="687" y="972" width="1" height="3" fill="#000"/>
<rect x="693" y="972" width="1" height="3" fill="#000"/>
<rect x="700" y="972" width="1" height="3" fill="#000"/>
<rect x="706" y="972" width="1" height="3" fill="#000"/>
<rect x="713" y="972" width="1" height="3" fill="#000"/>
<rect x="719" y="972" width="1" height="3" fill="#000"/>
<rect x="726" y="972" width="1" height="3" fill="#000"/>
<rect x="732" y="972" width="1" height="3" fill="#000"/>
<rect x="739" y="972" width="1" height="5" fill="#fff"/>
<rect x="745" y="972" width="1" height="3" fill="#000"/>
<rect x="752" y="972" width="1" height="3" fill="#000"/>
<rect x="758" y="972" width="1" height="3" fill="#000"/>
<rect x="765" y="972" width="1" height="3" fill="#000"/>
<rect x="771" y="972" width="1" height="3" fill="#000"/>
<rect x="778" y="972" width="1" height="3" fill="#000"/>
<rect x="785" y="972" width="1" height="3" fill="#000"/>
<rect x="791" y="972" width="1" height="3" fill="#000"/>
<rect x="798" y="972" width="1" height="3" fill="#000"/>
<rect x="804" y="972" width="1" height="5" fill="#fff"/>
<rect x="811" y="972" width="1" height="3" fill="#000"/>
<rect x="817" y="972" width="1" height="3" fill="#000"/>
<rect x="824" y="972" width="1" height="3" fill="#000"/>
<rect x="830" y="972" width="1" height="3" fill="#000"/>
<rect x="837" y="972" width="1" height="3" fill="#000"/>
<rect x="843" y="972" width="1" height="3" fill="#000"/>
<rect x="850" y="972" width="1" height="3" fill="#000"/>
<rect x="856" y="972" width="1" height="3" fill="#000"/>
<rect x="863" y="972" width="1" height="3" fill="#000"/>
<rect x="90" y="972" width="1" height="5" fill="#fff"/>
<rect x="864" y="972" width="1" height="5" fill="#fff"/>
</g>
<text x="76" y="974.4" text-anchor="end" fill="#fff">0</text>
<text x="76" y="932.5" text-anchor="end" fill="#fff">10</text>
<text x="76" y="890.6" text-anchor="end" fill="#fff">20</text>
<text x="76" y="848.7" text-anchor="end" fill="#fff">30</text>
<text x="76" y="806.8" text-anchor="end" fill="#fff">40</text>
<text x="76" y="764.9" text-anchor="end" fill="#fff">50</text>
<text x="76" y="723.0" text-anchor="end" fill="#fff">60</text>
<text x="76" y="681.1" text-anchor="end" fill="#fff">70</text>
<text x="76" y="639.2" text-anchor="end" fill="#fff">80</text>
<text x="76" y="597.3" text-anchor="end" fill="#fff">90</text>
<text x="76" y="555.4" text-anchor="end" fill="#fff">100</text>
<text x="76" y="513.5" text-anchor="end" fill="#fff">110</text>
<text x="76" y="471.6" text-anchor="end" fill="#fff">120</text>
<text x="76" y="429.7" text-anchor="end" fill="#fff">130</text>
<text x="76" y="387.8" text-anchor="end" fill="#fff">140</text>
<text x="76" y="345.9" text-anchor="end" fill="#fff">150</text>
<text x="76" y="304.0" text-anchor="end" fill="#fff">160</text>
<text x="76" y="262.1" text-anchor="end" fill="#fff">170</text>
<text x="76" y="220.2" text-anchor="end" fill="#fff">180</text>
<text x="76" y="178.3" text-anchor="end" fill="#fff">190</text>
<text x="76" y="136.4" text-anchor="end" fill="#fff">200</text>
<text x="76" y="81.9" text-anchor="end" fill="#fff">213,1</text>
<text x="876.5" y="974.4" fill="#dadada">0</text>
<text x="876.5" y="933.9" fill="#dadada">1</text>
<text x="876.5" y="893.4" fill="#dadada">2</text>
<text x="876.5" y="852.9" fill="#dadada">3</text>
<text x="876.5" y="812.4" fill="#dadada">4</text>
<text x="876.5" y="771.9" fill="#dadada">5</text>
<text x="876.5" y="731.3" fill="#dadada">6</text>
<text x="876.5" y="690.8" fill="#dadada">7</text>
<text x="876.5" y="650.3" fill="#dadada">8</text>
<text x="876.5" y="609.8" fill="#dadada">9</text>
<text x="876.5" y="569.3" fill="#dadada">10</text>
<text x="876.5" y="528.8" fill="#dadada">11</text>
<text x="876.5" y="488.3" fill="#dadada">12</text>
<text x="876.5" y="447.8" fill="#dadada">13</text>
<text x="876.5" y="407.3" fill="#dadada">14</text>
<text x="876.5" y="366.8" fill="#dadada">15</text>
<text x="876.5" y="326.2" fill="#dadada">16</text>
<text x="876.5" y="285.7" fill="#dadada">17</text>
<text x="876.5" y="245.2" fill="#dadada">18</text>
<text x="876.5" y="204.7" fill="#dadada">19</text>
<text x="876.5" y="164.2" fill="#dadada">20</text>
<text x="876.5" y="123.7" fill="#dadada">21</text>
<text x="876.5" y="81.5" fill="#dadada">22</text>
<text x="90.7" y="991" text-anchor="middle" fill="#f2a565">3068</text>
<text x="151.6" y="991" text-anchor="middle" fill="#f2a565">4000</text>
<text x="216.9" y="991" text-anchor="middle" fill="#f2a565">5000</text>
<text x="282.2" y="991" text-anchor="middle" fill="#f2a565">6000</text>
<text x="347.5" y="991" text-anchor="middle" fill="#f2a565">7000</text>
<text x="412.8" y="991" text-anchor="middle" fill="#f2a565">8000</text>
<text x="478.1" y="991" text-anchor="middle" fill="#f2a565">9000</text>
<text x="543.4" y="991" text-anchor="middle" fill="#f2a565">10000</text>
<text x="608.7" y="991" text-anchor="middle" fill="#f2a565">11000</text>
<text x="674.0" y="991" text-anchor="middle" fill="#f2a565">12000</text>
<text x="739.3" y="991" text-anchor="middle" fill="#f2a565">13000</text>
<text x="804.6" y="991" text-anchor="middle" fill="#f2a565">14000</text>
<text x="864.0" y="991" text-anchor="middle" fill="#f2a565">14910</text>
<text x="480.5" y="1010" text-anchor="middle" fill="#f2a565" font-size="13.6">Régime moteur (tr/mn)</text>
<text transform="translate(35.7,671) rotate(-90)" text-anchor="middle" fill="#fff" font-size="12.8">Puissance vilebrequin CE - Ch</text>
<text transform="translate(899.3,525) rotate(90)" text-anchor="middle" fill="#f0f0f0" font-size="13.1">Couple CE - daNm</text>
</svg>
<div style="left:920px;top:66px;width:350px;height:7px;background:;background:linear-gradient(#4a4d51,#2f3235);"></div>
<div style="left:920px;top:66px;width:7px;height:56px;background:;background:linear-gradient(to right,#4a4d51,#2f3235);clip-path:polygon(0 0,100% 7px,100% calc(100% - 5px),0 100%);"></div>
<div style="left:920px;top:117px;width:350px;height:5px;background:;background:linear-gradient(#6b6e71,#5a5d60);clip-path:polygon(7px 0,100% 0,100% 100%,0 100%);"></div>
<div style="left:927px;top:73px;width:343px;height:44px;background:#9c9c9c;"></div>
<div class="t cell" style="left:927px;top:73px;width:24px;height:21px;line-height:24px;padding-left:3px;padding-left:2.5px;"><span class="wx" style="transform:scaleX(0.98)">E1</span></div>
<div class="t cell" style="left:952px;top:73px;width:148px;height:21px;line-height:24px;padding-left:3px;padding-left:2px;"><span class="wx" style="transform:scaleX(1.15)">ZX10R-2011</span></div>
<div class="t cell" style="left:1101px;top:73px;width:169px;height:21px;line-height:24px;padding-left:3px;"><span class="wx" style="transform:scaleX(1.065)">ZX10R Stock FULL</span></div>
<div class="t cell" style="left:927px;top:95px;width:24px;height:21px;line-height:24px;padding-left:3px;padding-left:2.5px;"><span class="wx" style="transform:scaleX(0.98)">E2</span></div>
<div class="t cell" style="left:952px;top:95px;width:148px;height:21px;line-height:24px;padding-left:3px;padding-left:2px;"><span class="wx" style="transform:scaleX(1.15)">ZX10R-2011</span></div>
<div class="t cell" style="left:1101px;top:95px;width:169px;height:21px;line-height:24px;padding-left:3px;"><span class="wx" style="transform:scaleX(1.07)">ZX10R Flash 6 avec LEO</span></div>
<div style="left:920px;top:181px;width:350px;height:7px;background:;background:linear-gradient(#4a4d51,#2f3235);"></div>
<div style="left:920px;top:181px;width:7px;height:244px;background:;background:linear-gradient(to right,#4a4d51,#2f3235);clip-path:polygon(0 0,100% 7px,100% calc(100% - 5px),0 100%);"></div>
<div style="left:927px;top:188px;width:343px;height:19px;background:#9c9c9c;"></div>
<div class="t cell" style="left:927px;top:188px;width:76px;height:19px;line-height:22px;padding-left:3px;padding-left:2px;line-height:24px;"><span class="wx" style="transform:scaleX(1.14)">Val.</span></div>
<div class="t cell" style="left:1004px;top:188px;width:53px;height:19px;line-height:22px;padding-left:3px;padding-left:2px;line-height:24px;"><span class="wx" style="transform:scaleX(1.03)">E1</span></div>
<div class="t cell" style="left:1058px;top:188px;width:53px;height:19px;line-height:22px;padding-left:3px;padding-left:2px;line-height:24px;"><span class="wx" style="transform:scaleX(1.03)">E2</span></div>
<div class="t cell" style="left:1112px;top:188px;width:54px;height:19px;line-height:22px;padding-left:3px;padding-left:2px;line-height:24px;"><span class="wx" style="transform:scaleX(1.03)">E3</span></div>
<div class="t cell" style="left:1167px;top:188px;width:53px;height:19px;line-height:22px;padding-left:3px;padding-left:2px;line-height:24px;"><span class="wx" style="transform:scaleX(1.03)">E4</span></div>
<div class="t cell" style="left:1221px;top:188px;width:49px;height:19px;line-height:22px;padding-left:3px;padding-left:2px;line-height:24px;"><span class="wx" style="transform:scaleX(1.03)">E5</span></div>
<div style="left:927px;top:207px;width:343px;height:6px;background:;background:linear-gradient(#54575b,#303336);"></div>
<div style="left:927px;top:306px;width:343px;height:4px;background:;background:linear-gradient(#63666a,#585b5f);"></div>
<div style="left:927px;top:213px;width:343px;height:26px;background:#cdcdcd;border-top:1px solid #dedede;border-bottom:1px solid #a8a8a8;"></div>
<div class="t" style="left:927px;top:213px;width:46px;height:25px;line-height:21px;text-align:center;background:linear-gradient(#e6e6e6,#dadada);border-top:1px solid #efefef;border-left:1px solid #efefef;border-right:2px solid #b4b4b4;border-bottom:2px solid #b4b4b4;font-size:13.5px;padding-left:5px;">Y1</div>
<div class="t" style="left:976px;top:215px;width:291px;height:21px;line-height:21px;background:#000;color:#7fd63a;font-weight:normal;font-size:13.5px;padding-left:2px;">Puissance vilebrequin CE - Ch</div>
<div style="left:927px;top:238px;width:343px;height:69px;background:#d2d2d2;"></div>
<div style="left:930px;top:241px;width:340px;height:65px;background:#9c9c9c;"></div>
<div class="t cell" style="left:931px;top:241px;width:71px;height:21px;line-height:24px;padding-left:3px;padding-left:2px;"><span class="wx" style="transform:scaleX(1.18)">Maxi</span></div>
<div class="t cell" style="left:1003px;top:241px;width:55px;height:21px;line-height:24px;padding-left:3px;padding-left:2px;"><span class="wx">192,0</span></div>
<div class="t cell" style="left:1059px;top:241px;width:52px;height:21px;line-height:24px;padding-left:3px;padding-left:2.5px;"><span class="wx">213,1</span></div>
<div class="t cell" style="left:1112px;top:241px;width:54px;height:21px;line-height:24px;padding-left:3px;padding-left:2px;"></div>
<div class="t cell" style="left:1167px;top:241px;width:53px;height:21px;line-height:24px;padding-left:3px;padding-left:2px;"></div>
<div class="t cell" style="left:1221px;top:241px;width:49px;height:21px;line-height:24px;padding-left:3px;padding-left:2px;"></div>
<div class="t cell" style="left:931px;top:263px;width:71px;height:21px;line-height:24px;padding-left:3px;padding-left:2px;"><span class="wx" style="transform:scaleX(1.15)">N</span></div>
<div class="t cell" style="left:1003px;top:263px;width:55px;height:21px;line-height:24px;padding-left:3px;padding-left:2px;"><span class="wx">13155</span></div>
<div class="t cell" style="left:1059px;top:263px;width:52px;height:21px;line-height:24px;padding-left:3px;padding-left:2.5px;"><span class="wx">14492</span></div>
<div class="t cell" style="left:1112px;top:263px;width:54px;height:21px;line-height:24px;padding-left:3px;padding-left:2px;"></div>
<div class="t cell" style="left:1167px;top:263px;width:53px;height:21px;line-height:24px;padding-left:3px;padding-left:2px;"></div>
<div class="t cell" style="left:1221px;top:263px;width:49px;height:21px;line-height:24px;padding-left:3px;padding-left:2px;"></div>
<div class="t cell" style="left:931px;top:285px;width:71px;height:21px;line-height:24px;padding-left:3px;padding-left:2px;color:#e87722;"><span class="wx">3068</span></div>
<div class="t cell" style="left:1003px;top:285px;width:55px;height:21px;line-height:24px;padding-left:3px;padding-left:2px;"><span class="wx">0,0</span></div>
<div class="t cell" style="left:1059px;top:285px;width:52px;height:21px;line-height:24px;padding-left:3px;padding-left:2.5px;"><span class="wx">0,0</span></div>
<div class="t cell" style="left:1112px;top:285px;width:54px;height:21px;line-height:24px;padding-left:3px;padding-left:2px;"></div>
<div class="t cell" style="left:1167px;top:285px;width:53px;height:21px;line-height:24px;padding-left:3px;padding-left:2px;"></div>
<div class="t cell" style="left:1221px;top:285px;width:49px;height:21px;line-height:24px;padding-left:3px;padding-left:2px;"></div>
<div style="left:989px;top:310px;width:48px;height:11px;background:#45484b;border-top:2px solid #34373a;border-left:2px solid #3a3d40;border-bottom:1px solid #6b6e71;border-right:1px solid #6b6e71;"></div>
<div style="left:992px;top:313px;width:43px;height:5px;background:#2fd02f;"></div>
<div style="left:1047px;top:310px;width:48px;height:11px;background:#45484b;border-top:2px solid #34373a;border-left:2px solid #3a3d40;border-bottom:1px solid #6b6e71;border-right:1px solid #6b6e71;"></div>
<div style="left:1050px;top:313px;width:43px;height:5px;background:#5bb8f7;"></div>
<div style="left:927px;top:321px;width:343px;height:6px;background:;background:linear-gradient(#54575b,#303336);"></div>
<div style="left:927px;top:419px;width:343px;height:4px;background:;background:linear-gradient(#63666a,#585b5f);"></div>
<div style="left:927px;top:327px;width:343px;height:25px;background:#cdcdcd;border-top:1px solid #dedede;border-bottom:1px solid #a8a8a8;"></div>
<div class="t" style="left:927px;top:327px;width:45px;height:24px;line-height:20px;text-align:center;background:linear-gradient(#e6e6e6,#dadada);border-top:1px solid #efefef;border-left:1px solid #efefef;border-right:2px solid #b4b4b4;border-bottom:2px solid #b4b4b4;font-size:13.5px;padding-left:5px;">Y2</div>
<div class="t" style="left:975px;top:329px;width:292px;height:21px;line-height:21px;background:#000;color:#7fd63a;font-weight:normal;font-size:13.5px;padding-left:2px;">Couple CE - daNm</div>
<div style="left:927px;top:351px;width:343px;height:69px;background:#d2d2d2;"></div>
<div style="left:930px;top:354px;width:340px;height:65px;background:#9c9c9c;"></div>
<div class="t cell" style="left:931px;top:354px;width:71px;height:21px;line-height:24px;padding-left:3px;padding-left:2px;"><span class="wx" style="transform:scaleX(1.18)">Maxi</span></div>
<div class="t cell" style="left:1003px;top:354px;width:55px;height:21px;line-height:24px;padding-left:3px;padding-left:2px;"><span class="wx">11,0</span></div>
<div class="t cell" style="left:1059px;top:354px;width:52px;height:21px;line-height:24px;padding-left:3px;padding-left:2.5px;"><span class="wx">11,0</span></div>
<div class="t cell" style="left:1112px;top:354px;width:54px;height:21px;line-height:24px;padding-left:3px;padding-left:2px;"></div>
<div class="t cell" style="left:1167px;top:354px;width:53px;height:21px;line-height:24px;padding-left:3px;padding-left:2px;"></div>
<div class="t cell" style="left:1221px;top:354px;width:49px;height:21px;line-height:24px;padding-left:3px;padding-left:2px;"></div>
<div class="t cell" style="left:931px;top:376px;width:71px;height:21px;line-height:24px;padding-left:3px;padding-left:2px;"><span class="wx" style="transform:scaleX(1.15)">N</span></div>
<div class="t cell" style="left:1003px;top:376px;width:55px;height:21px;line-height:24px;padding-left:3px;padding-left:2px;"><span class="wx">10791</span></div>
<div class="t cell" style="left:1059px;top:376px;width:52px;height:21px;line-height:24px;padding-left:3px;padding-left:2.5px;"><span class="wx">11162</span></div>
<div class="t cell" style="left:1112px;top:376px;width:54px;height:21px;line-height:24px;padding-left:3px;padding-left:2px;"></div>
<div class="t cell" style="left:1167px;top:376px;width:53px;height:21px;line-height:24px;padding-left:3px;padding-left:2px;"></div>
<div class="t cell" style="left:1221px;top:376px;width:49px;height:21px;line-height:24px;padding-left:3px;padding-left:2px;"></div>
<div class="t cell" style="left:931px;top:398px;width:71px;height:21px;line-height:24px;padding-left:3px;padding-left:2px;color:#e87722;"><span class="wx">3068</span></div>
<div class="t cell" style="left:1003px;top:398px;width:55px;height:21px;line-height:24px;padding-left:3px;padding-left:2px;"><span class="wx">0,0</span></div>
<div class="t cell" style="left:1059px;top:398px;width:52px;height:21px;line-height:24px;padding-left:3px;padding-left:2.5px;"><span class="wx">0,0</span></div>
<div class="t cell" style="left:1112px;top:398px;width:54px;height:21px;line-height:24px;padding-left:3px;padding-left:2px;"></div>
<div class="t cell" style="left:1167px;top:398px;width:53px;height:21px;line-height:24px;padding-left:3px;padding-left:2px;"></div>
<div class="t cell" style="left:1221px;top:398px;width:49px;height:21px;line-height:24px;padding-left:3px;padding-left:2px;"></div>
<div style="left:989px;top:425px;width:48px;height:11px;background:#45484b;border-top:2px solid #34373a;border-left:2px solid #3a3d40;border-bottom:1px solid #6b6e71;border-right:1px solid #6b6e71;"></div>
<div style="left:992px;top:428px;width:43px;height:5px;background:#22a02c;"></div>
<div style="left:1047px;top:425px;width:48px;height:11px;background:#45484b;border-top:2px solid #34373a;border-left:2px solid #3a3d40;border-bottom:1px solid #6b6e71;border-right:1px solid #6b6e71;"></div>
<div style="left:1050px;top:428px;width:43px;height:5px;background:#1565ea;"></div>
<div style="left:921px;top:880px;width:349px;height:7px;background:;background:linear-gradient(#515458,#3a3d40);"></div>
<div style="left:927px;top:886px;width:343px;height:92px;background:#d4d4d4;"></div>
<div style="left:930px;top:888px;width:340px;height:87px;background:#9c9c9c;"></div>
<div class="t cell" style="left:930px;top:888px;width:71px;height:21px;line-height:24px;padding-left:3px;"><span class="wx" style="transform:scaleX(1.14)">Pert.</span></div>
<div class="t cell" style="left:1002px;top:888px;width:55px;height:21px;line-height:24px;padding-left:3px;"><span class="wx">28,37</span></div>
<div class="t cell" style="left:1058px;top:888px;width:55px;height:21px;line-height:24px;padding-left:3px;"><span class="wx">24,27</span></div>
<div class="t cell" style="left:1114px;top:888px;width:55px;height:21px;line-height:24px;padding-left:3px;"></div>
<div class="t cell" style="left:1170px;top:888px;width:51px;height:21px;line-height:24px;padding-left:3px;"></div>
<div class="t cell" style="left:1222px;top:888px;width:48px;height:21px;line-height:24px;padding-left:3px;"></div>
<div class="t cell" style="left:930px;top:910px;width:71px;height:21px;line-height:24px;padding-left:3px;"><span class="wx" style="transform:scaleX(1.17)">Temp.</span></div>
<div class="t cell" style="left:1002px;top:910px;width:55px;height:21px;line-height:24px;padding-left:3px;"><span class="wx">22.4</span></div>
<div class="t cell" style="left:1058px;top:910px;width:55px;height:21px;line-height:24px;padding-left:3px;"><span class="wx">29.4</span></div>
<div class="t cell" style="left:1114px;top:910px;width:55px;height:21px;line-height:24px;padding-left:3px;"></div>
<div class="t cell" style="left:1170px;top:910px;width:51px;height:21px;line-height:24px;padding-left:3px;"></div>
<div class="t cell" style="left:1222px;top:910px;width:48px;height:21px;line-height:24px;padding-left:3px;"></div>
<div class="t cell" style="left:930px;top:932px;width:71px;height:21px;line-height:24px;padding-left:3px;"><span class="wx" style="transform:scaleX(1.18)">Hygro.</span></div>
<div class="t cell" style="left:1002px;top:932px;width:55px;height:21px;line-height:24px;padding-left:3px;"><span class="wx">27.0</span></div>
<div class="t cell" style="left:1058px;top:932px;width:55px;height:21px;line-height:24px;padding-left:3px;"><span class="wx">21.5</span></div>
<div class="t cell" style="left:1114px;top:932px;width:55px;height:21px;line-height:24px;padding-left:3px;"></div>
<div class="t cell" style="left:1170px;top:932px;width:51px;height:21px;line-height:24px;padding-left:3px;"></div>
<div class="t cell" style="left:1222px;top:932px;width:48px;height:21px;line-height:24px;padding-left:3px;"></div>
<div class="t cell" style="left:930px;top:954px;width:71px;height:21px;line-height:24px;padding-left:3px;"><span class="wx" style="transform:scaleX(1.03)">Press.</span></div>
<div class="t cell" style="left:1002px;top:954px;width:55px;height:21px;line-height:24px;padding-left:3px;"><span class="wx">988</span></div>
<div class="t cell" style="left:1058px;top:954px;width:55px;height:21px;line-height:24px;padding-left:3px;"><span class="wx">995</span></div>
<div class="t cell" style="left:1114px;top:954px;width:55px;height:21px;line-height:24px;padding-left:3px;"></div>
<div class="t cell" style="left:1170px;top:954px;width:51px;height:21px;line-height:24px;padding-left:3px;"></div>
<div class="t cell" style="left:1222px;top:954px;width:48px;height:21px;line-height:24px;padding-left:3px;"></div>
<div style="left:942px;top:983px;width:200px;height:27px;background:#55585c;border-top:4px solid #303336;border-left:4px solid #36393c;border-bottom:4px solid #5f6265;border-right:4px solid #5d6063;"></div>
<div style="left:983px;top:990px;width:31px;height:15px;background:#4e5155;border-top:2px solid #35383b;border-left:3px solid #3d4043;border-bottom:3px solid #63666a;border-right:4px solid #606367;"></div>
<div style="left:986px;top:992px;width:24px;height:9.5px;background:#ff0000;"></div>
<div class="t" style="left:958.5px;top:990.5px;color:#fff;font-weight:normal;font-size:13.5px;">Curs.</div>
<div style="left:1157px;top:983px;width:89px;height:27px;background:#55585c;border-top:4px solid #303336;border-left:4px solid #36393c;border-bottom:4px solid #5f6265;border-right:4px solid #5d6063;"></div>
<div class="t" style="left:1165px;top:991px;color:#fff;font-weight:normal;font-size:12.7px;">Ligne</div>
<div class="t" style="left:1200px;top:987px;width:40px;height:20px;line-height:19px;background:linear-gradient(to right,#dedede,#d6d6d6 60%,#bdbdbd);border-top:1px solid #ececec;border-left:1px solid #ececec;border-right:1px solid #8a8a8a;border-bottom:1px solid #8a8a8a;font-weight:normal;font-size:12.5px;padding-left:5px;">3</div>
<svg width="16" height="10" viewBox="0 0 16 10" style="left:1219px;top:994px"><path d="M1.500 1.500H14.500L8 9Z" fill="#dcdcdc" stroke="#555" stroke-width="1"/></svg>
<div class="btn" style="left:729px;top:995px;width:97px;height:19px;line-height:22px;"><span class="nx" style="transform:scaleX(.905)">Plein écran</span></div>
<div style="left:827px;top:993px;width:87px;height:21px;background:#595c60;border-top:1px solid #6a6d70;border-left:1px solid #606366;"></div>
<div style="left:840px;top:997px;width:19.5px;height:16px;background:linear-gradient(#cecece,#c0c0c0);border-top:1px solid #e4e4e4;border-left:1px solid #e4e4e4;border-right:1px solid #8a8a8a;border-bottom:1px solid #8a8a8a;"></div>
<div style="left:861px;top:997px;width:19.5px;height:16px;background:#808080;border-top:1px solid #6a6a6a;border-left:1px solid #6a6a6a;border-right:1px solid #9a9a9a;border-bottom:1px solid #9a9a9a;"></div>
<div style="left:882px;top:997px;width:19.5px;height:16px;background:linear-gradient(#cecece,#c0c0c0);border-top:1px solid #e4e4e4;border-left:1px solid #e4e4e4;border-right:1px solid #8a8a8a;border-bottom:1px solid #8a8a8a;"></div>
<svg width="64" height="18" viewBox="0 0 64 18" style="left:839px;top:996px">
<rect x="3.900" y="4.200" width="3" height="2.600" fill="#5a5f55"/><path d="M5 9.300H18M11.500 3.100V15.900" stroke="#000" stroke-width="1.100"/><circle cx="11.500" cy="9.300" r="1.300" fill="#fff" stroke="#000" stroke-width=".8"/>
<rect x="25" y="4.200" width="2.900" height="2.900" fill="#3fe03f"/><path d="M31.200 11.200L26.600 15" stroke="#111" stroke-width="3"/><path d="M30.800 11.500L27 14.700" stroke="#e8e8e8" stroke-width="1.200"/><circle cx="34.800" cy="7.200" r="3.500" fill="#f1ecff" stroke="#111" stroke-width="1.200"/><path d="M32.600 7.200h4.400M34.800 5v4.400" stroke="#111" stroke-width="1.100"/><path d="M33.800 13.300h5.400l-2.700 2.700z" fill="#111"/>
<rect x="46" y="4.200" width="2.900" height="2.700" fill="#5a5f55"/><path d="M51 15.200L47.400 10.300C46.800 9.300 47.900 8.600 48.700 9.400L50.100 11V5.600c0-1.200 1.700-1.200 1.700 0V9V4.400c0-1.200 1.700-1.200 1.700 0V9V4.900c0-1.200 1.700-1.200 1.700 0V9.400V6.600c0-1.200 1.700-1.200 1.700 0V11.500c0 1.600-.7 2.600-1.400 3.700" fill="#e6e6e6" stroke="#111" stroke-width="1"/>
</svg>
</body></html>
